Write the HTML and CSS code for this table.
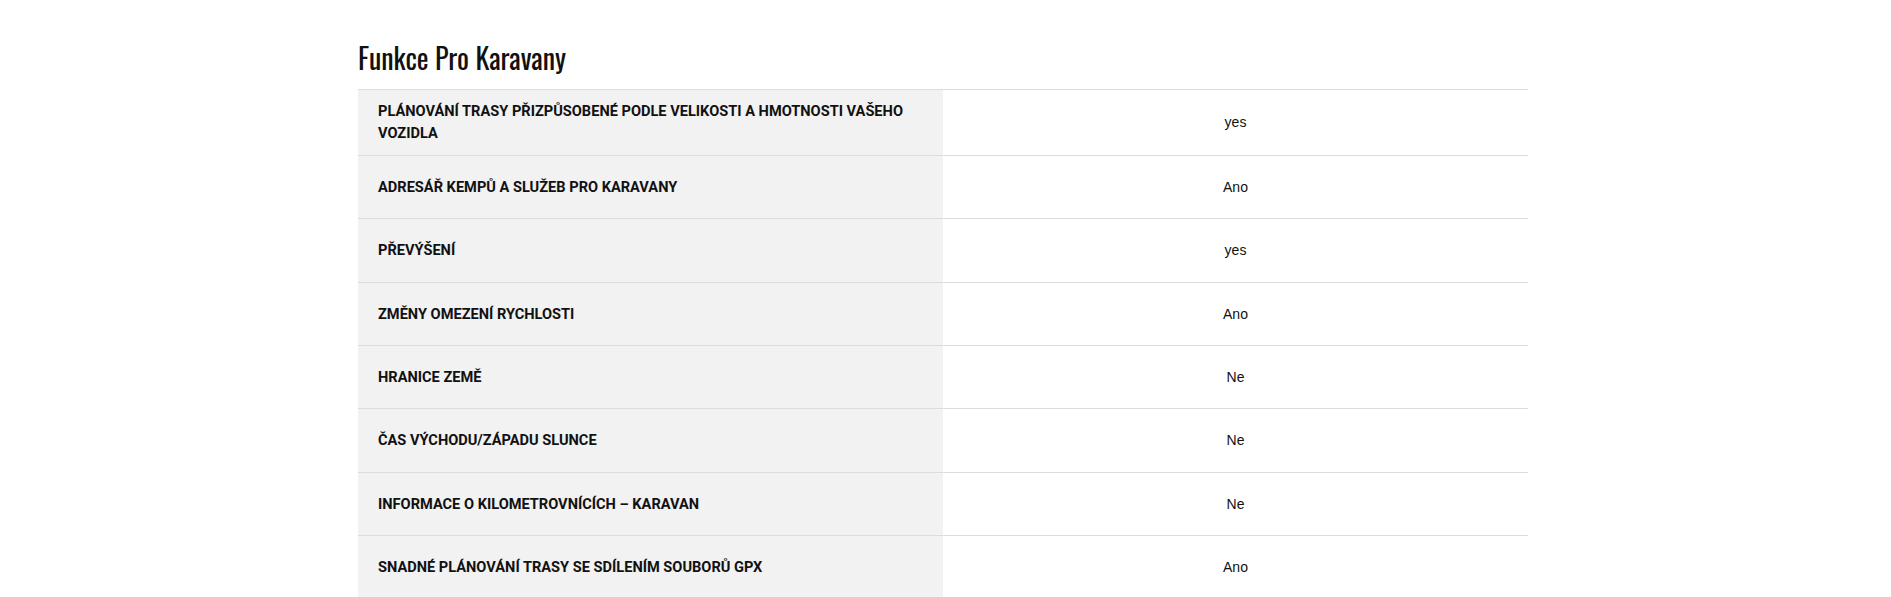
FILE: index.html
```html
<!DOCTYPE html>
<html lang="cs">
<head>
<meta charset="utf-8">
<title>Funkce Pro Karavany</title>
<link rel="stylesheet" href="styles.css">
</head>
<body>
<section class="features">
  <h2 class="features-title">Funkce Pro Karavany</h2>
  <table class="features-table">
    <colgroup>
      <col class="col-label">
      <col class="col-value">
    </colgroup>
    <tbody>
      <tr><th class="label">Plánování trasy přizpůsobené podle velikosti a hmotnosti vašeho vozidla</th><td class="value">yes</td></tr>
      <tr><th class="label">Adresář kempů a služeb pro karavany</th><td class="value">Ano</td></tr>
      <tr><th class="label">Převýšení</th><td class="value">yes</td></tr>
      <tr><th class="label">Změny omezení rychlosti</th><td class="value">Ano</td></tr>
      <tr><th class="label">Hranice země</th><td class="value">Ne</td></tr>
      <tr><th class="label">Čas východu/západu slunce</th><td class="value">Ne</td></tr>
      <tr><th class="label">Informace o kilometrovnících – Karavan</th><td class="value">Ne</td></tr>
      <tr><th class="label">Snadné plánování trasy se sdílením souborů GPX</th><td class="value">Ano</td></tr>
    </tbody>
  </table>
</section>
</body>
</html>
```

FILE: styles.css
```css
html, body {
  margin: 0;
  padding: 0;
  background: #ffffff;
}

.features {
  width: 1170px;
  margin-left: calc(50% - 587.5px);
  padding-top: 40px;
}

.features-title {
  margin: 0 0 14px 0;
  font-family: "Oswald", "DejaVu Sans Condensed", "DejaVu Sans", sans-serif;
  font-weight: 400;
  font-size: 28px;
  line-height: 35px;
  color: #111111;
}

.features-table {
  width: 100%;
  border-collapse: collapse;
  table-layout: fixed;
  border-top: 1px solid #dcdcdc;
}

.col-label,
.col-value {
  width: 50%;
}

.features-table tr {
  border-bottom: 1px solid #dcdcdc;
}

.label {
  background: #f2f2f2;
  padding: 10px 20px;
  text-align: left;
  vertical-align: middle;
  font-family: Roboto, "Liberation Sans", sans-serif;
  font-weight: 700;
  font-size: 14.6px;
  line-height: 22.4px;
  text-transform: uppercase;
  color: #111111;
}

.value {
  padding: 20px;
  text-align: center;
  vertical-align: middle;
  font-family: "Liberation Sans", Arial, sans-serif;
  font-size: 14px;
  line-height: 22.4px;
  color: #111111;
}
```
